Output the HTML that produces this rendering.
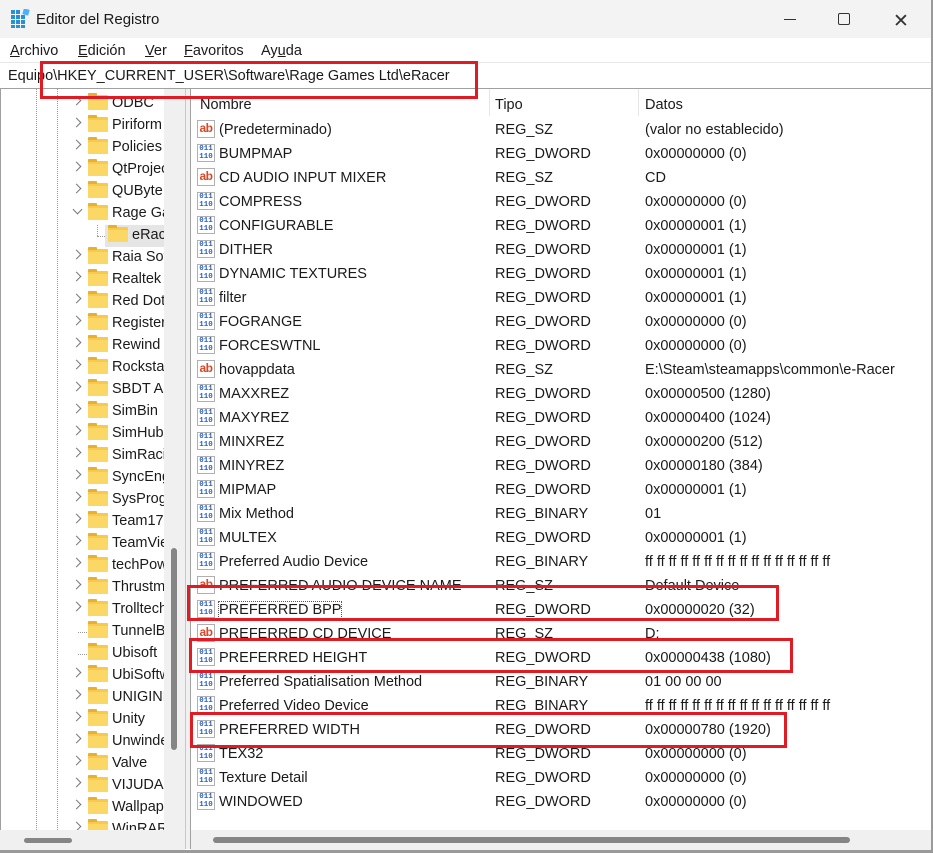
<!DOCTYPE html>
<html><head><meta charset="utf-8"><style>
*{margin:0;padding:0;box-sizing:border-box}
body{width:933px;height:853px;background:#fff;font-family:"Liberation Sans",sans-serif;font-size:14.5px;color:#1a1a1a;position:relative;overflow:hidden}
.a{position:absolute;white-space:nowrap}
.title{left:0;top:0;width:933px;height:38px;background:#f3f3f3;border-right:2px solid #9a9a9a}
.menu{left:0;top:38px;width:933px;height:24px;background:#fff;border-right:2px solid #9a9a9a}
.addr{left:0;top:62px;width:933px;height:27px;background:#fff;border-top:1px solid #e8e8e8;border-bottom:1px solid #a0a0a0;border-right:2px solid #9a9a9a}
.tree{left:0;top:89px;width:164px;height:741px;overflow:hidden;background:#fff;border-left:1px solid #a0a0a0}
.tr{position:absolute;left:0;height:22px;width:170px}
.tr .ch{position:absolute;left:72px;top:6px;width:7px;height:7px;border-right:1.4px solid #777;border-top:1.4px solid #777;transform:rotate(45deg)}
.tr .fd{position:absolute;left:87px;top:4px;width:20px;height:15px;background:#f8c94a;border-radius:1px}
.tr .fd:before{content:"";position:absolute;left:0;top:-2px;width:9px;height:3px;background:#e8b030;border-radius:1px 1px 0 0}
.tr .fd:after{content:"";position:absolute;left:0;top:3px;width:20px;height:12px;background:#fbd765;border-radius:1px}
.tr span{position:absolute;left:111px;top:4px}
.vs{left:164px;top:89px;width:21px;height:741px;background:#f0f0f0}
.split{left:185px;top:89px;width:6px;height:760px;background:#f0f0f0;border-left:1px solid #c8c8c8;border-right:1px solid #a0a0a0}
.list{left:191px;top:89px;width:740px;height:741px;background:#fff;overflow:hidden}
.row{position:absolute;left:0;height:24px;width:740px}
.row .ic{position:absolute;left:6px;top:3px;width:18px;height:18px}
.row .n{position:absolute;left:28px;top:5px}
.row .t{position:absolute;left:304px;top:5px}
.row .d{position:absolute;left:454px;top:5px}
.ab{background:#fff;border:1px solid #b0b0b0;color:#d8482a;font-weight:bold;font-size:12px;line-height:15px;text-align:center;letter-spacing:-0.5px}
.bn{background:#fff;border:1px solid #b0b0b0;color:#2a62c8;font-weight:bold;font-size:7.5px;line-height:7.5px;text-align:center;padding-top:1px;font-family:"Liberation Mono",monospace}
.hs{background:#f0f0f0}
.red{position:absolute;border:3px solid #e01b24}
</style></head><body>
<div class="a title"></div>
<svg class="a" style="left:10px;top:9px" width="20" height="20" viewBox="0 0 20 20"><g fill="#2b8fd6"><rect x="1" y="6" width="4" height="4"/><rect x="6" y="6" width="4" height="4"/><rect x="11" y="6" width="4" height="4"/><rect x="1" y="11" width="4" height="4"/><rect x="6" y="11" width="4" height="4"/><rect x="11" y="11" width="4" height="4"/><rect x="1" y="16" width="4" height="3"/><rect x="6" y="16" width="4" height="3"/><rect x="11" y="16" width="4" height="3"/><rect x="1" y="1" width="4" height="4"/><rect x="6" y="1" width="4" height="4"/></g><rect x="13" y="0" width="6" height="6" fill="#4bb0ff" transform="rotate(15 16 3)"/></svg>
<div class="a" style="left:36px;top:11px;font-size:15px">Editor del Registro</div>
<div class="a" style="left:784px;top:19px;width:12px;height:1px;background:#333"></div>
<div class="a" style="left:838px;top:13px;width:12px;height:12px;border:1.3px solid #333;border-radius:2px"></div>
<div class="a" style="left:893px;top:10px;font-size:19px;color:#333">✕</div>
<div class="a menu"></div>
<div class="a" style="left:10px;top:43px"><u>A</u>rchivo</div>
<div class="a" style="left:78px;top:43px"><u>E</u>dición</div>
<div class="a" style="left:145px;top:43px"><u>V</u>er</div>
<div class="a" style="left:184px;top:43px"><u>F</u>avoritos</div>
<div class="a" style="left:261px;top:43px">Ay<u>u</u>da</div>
<div class="a addr"></div>
<div class="a" style="left:8px;top:68px">Equipo\HKEY_CURRENT_USER\Software\Rage Games Ltd\eRacer</div>

<div class="a tree">
<div class="a" style="left:35px;top:0;height:741px;border-left:1px dotted #999"></div>
<div class="a" style="left:56px;top:0;height:741px;border-left:1px dotted #999"></div>
<div class="tr" style="top:2px"><i class="ch"></i><i class="fd"></i><span>ODBC</span></div>
<div class="tr" style="top:24px"><i class="ch"></i><i class="fd"></i><span>Piriform</span></div>
<div class="tr" style="top:46px"><i class="ch"></i><i class="fd"></i><span>Policies</span></div>
<div class="tr" style="top:68px"><i class="ch"></i><i class="fd"></i><span>QtProject</span></div>
<div class="tr" style="top:90px"><i class="ch"></i><i class="fd"></i><span>QUByte</span></div>
<div class="tr" style="top:112px"><i class="ch" style="transform:rotate(135deg);left:73px;top:5px"></i><i class="fd"></i><span>Rage Games</span></div>
<div class="a" style="left:96px;top:136px;height:11px;border-left:1px dotted #999"></div>
<div class="a" style="left:96px;top:147px;width:10px;border-top:1px dotted #999"></div>
<div class="a" style="left:104px;top:136px;width:60px;height:22px;background:#e5e5e5"></div>
<div class="tr" style="top:134px;left:20px"><i class="fd"></i><span>eRacer</span></div>
<div class="tr" style="top:156px"><i class="ch"></i><i class="fd"></i><span>Raia Software</span></div>
<div class="tr" style="top:178px"><i class="ch"></i><i class="fd"></i><span>Realtek</span></div>
<div class="tr" style="top:200px"><i class="ch"></i><i class="fd"></i><span>Red Dot</span></div>
<div class="tr" style="top:222px"><i class="ch"></i><i class="fd"></i><span>Registered</span></div>
<div class="tr" style="top:244px"><i class="ch"></i><i class="fd"></i><span>Rewind</span></div>
<div class="tr" style="top:266px"><i class="ch"></i><i class="fd"></i><span>Rockstar</span></div>
<div class="tr" style="top:288px"><i class="ch"></i><i class="fd"></i><span>SBDT AB</span></div>
<div class="tr" style="top:310px"><i class="ch"></i><i class="fd"></i><span>SimBin</span></div>
<div class="tr" style="top:332px"><i class="ch"></i><i class="fd"></i><span>SimHub</span></div>
<div class="tr" style="top:354px"><i class="ch"></i><i class="fd"></i><span>SimRacing</span></div>
<div class="tr" style="top:376px"><i class="ch"></i><i class="fd"></i><span>SyncEngine</span></div>
<div class="tr" style="top:398px"><i class="ch"></i><i class="fd"></i><span>SysProg</span></div>
<div class="tr" style="top:420px"><i class="ch"></i><i class="fd"></i><span>Team17</span></div>
<div class="tr" style="top:442px"><i class="ch"></i><i class="fd"></i><span>TeamViewer</span></div>
<div class="tr" style="top:464px"><i class="ch"></i><i class="fd"></i><span>techPowerUp</span></div>
<div class="tr" style="top:486px"><i class="ch"></i><i class="fd"></i><span>Thrustmaster</span></div>
<div class="tr" style="top:508px"><i class="ch"></i><i class="fd"></i><span>Trolltech</span></div>
<div class="a" style="left:77px;top:543px;width:9px;border-top:1px dotted #999"></div>
<div class="tr" style="top:530px"><i class="fd"></i><span>TunnelBear</span></div>
<div class="a" style="left:77px;top:565px;width:9px;border-top:1px dotted #999"></div>
<div class="tr" style="top:552px"><i class="fd"></i><span>Ubisoft</span></div>
<div class="tr" style="top:574px"><i class="ch"></i><i class="fd"></i><span>UbiSoftware</span></div>
<div class="tr" style="top:596px"><i class="ch"></i><i class="fd"></i><span>UNIGINE</span></div>
<div class="tr" style="top:618px"><i class="ch"></i><i class="fd"></i><span>Unity</span></div>
<div class="tr" style="top:640px"><i class="ch"></i><i class="fd"></i><span>Unwinder</span></div>
<div class="tr" style="top:662px"><i class="ch"></i><i class="fd"></i><span>Valve</span></div>
<div class="tr" style="top:684px"><i class="ch"></i><i class="fd"></i><span>VIJUDA</span></div>
<div class="tr" style="top:706px"><i class="ch"></i><i class="fd"></i><span>Wallpaper</span></div>
<div class="tr" style="top:728px"><i class="ch"></i><i class="fd"></i><span>WinRAR</span></div>
</div>
<div class="a vs"></div>
<div class="a" style="left:171px;top:548px;width:6px;height:202px;background:#858585;border-radius:3px"></div>
<div class="a hs" style="left:0;top:830px;width:185px;height:20px"></div>
<div class="a" style="left:24px;top:838px;width:48px;height:5px;background:#858585;border-radius:3px"></div>
<div class="a split"></div>

<div class="a list">
<div class="a" style="left:9px;top:8px">Nombre</div>
<div class="a" style="left:298px;top:0;width:1px;height:27px;background:#e5e5e5"></div>
<div class="a" style="left:304px;top:8px">Tipo</div>
<div class="a" style="left:447px;top:0;width:1px;height:27px;background:#e5e5e5"></div>
<div class="a" style="left:454px;top:8px">Datos</div>
<div class="row" style="top:28px"><div class="ic ab">ab</div><span class="n">(Predeterminado)</span><span class="t">REG_SZ</span><span class="d">(valor no establecido)</span></div>
<div class="row" style="top:52px"><div class="ic bn">011<br>110</div><span class="n">BUMPMAP</span><span class="t">REG_DWORD</span><span class="d">0x00000000 (0)</span></div>
<div class="row" style="top:76px"><div class="ic ab">ab</div><span class="n">CD AUDIO INPUT MIXER</span><span class="t">REG_SZ</span><span class="d">CD</span></div>
<div class="row" style="top:100px"><div class="ic bn">011<br>110</div><span class="n">COMPRESS</span><span class="t">REG_DWORD</span><span class="d">0x00000000 (0)</span></div>
<div class="row" style="top:124px"><div class="ic bn">011<br>110</div><span class="n">CONFIGURABLE</span><span class="t">REG_DWORD</span><span class="d">0x00000001 (1)</span></div>
<div class="row" style="top:148px"><div class="ic bn">011<br>110</div><span class="n">DITHER</span><span class="t">REG_DWORD</span><span class="d">0x00000001 (1)</span></div>
<div class="row" style="top:172px"><div class="ic bn">011<br>110</div><span class="n">DYNAMIC TEXTURES</span><span class="t">REG_DWORD</span><span class="d">0x00000001 (1)</span></div>
<div class="row" style="top:196px"><div class="ic bn">011<br>110</div><span class="n">filter</span><span class="t">REG_DWORD</span><span class="d">0x00000001 (1)</span></div>
<div class="row" style="top:220px"><div class="ic bn">011<br>110</div><span class="n">FOGRANGE</span><span class="t">REG_DWORD</span><span class="d">0x00000000 (0)</span></div>
<div class="row" style="top:244px"><div class="ic bn">011<br>110</div><span class="n">FORCESWTNL</span><span class="t">REG_DWORD</span><span class="d">0x00000000 (0)</span></div>
<div class="row" style="top:268px"><div class="ic ab">ab</div><span class="n">hovappdata</span><span class="t">REG_SZ</span><span class="d">E:\Steam\steamapps\common\e-Racer</span></div>
<div class="row" style="top:292px"><div class="ic bn">011<br>110</div><span class="n">MAXXREZ</span><span class="t">REG_DWORD</span><span class="d">0x00000500 (1280)</span></div>
<div class="row" style="top:316px"><div class="ic bn">011<br>110</div><span class="n">MAXYREZ</span><span class="t">REG_DWORD</span><span class="d">0x00000400 (1024)</span></div>
<div class="row" style="top:340px"><div class="ic bn">011<br>110</div><span class="n">MINXREZ</span><span class="t">REG_DWORD</span><span class="d">0x00000200 (512)</span></div>
<div class="row" style="top:364px"><div class="ic bn">011<br>110</div><span class="n">MINYREZ</span><span class="t">REG_DWORD</span><span class="d">0x00000180 (384)</span></div>
<div class="row" style="top:388px"><div class="ic bn">011<br>110</div><span class="n">MIPMAP</span><span class="t">REG_DWORD</span><span class="d">0x00000001 (1)</span></div>
<div class="row" style="top:412px"><div class="ic bn">011<br>110</div><span class="n">Mix Method</span><span class="t">REG_BINARY</span><span class="d">01</span></div>
<div class="row" style="top:436px"><div class="ic bn">011<br>110</div><span class="n">MULTEX</span><span class="t">REG_DWORD</span><span class="d">0x00000001 (1)</span></div>
<div class="row" style="top:460px"><div class="ic bn">011<br>110</div><span class="n">Preferred Audio Device</span><span class="t">REG_BINARY</span><span class="d">ff ff ff ff ff ff ff ff ff ff ff ff ff ff ff ff</span></div>
<div class="row" style="top:484px"><div class="ic ab">ab</div><span class="n">PREFERRED AUDIO DEVICE NAME</span><span class="t">REG_SZ</span><span class="d">Default Device</span></div>
<div class="row" style="top:508px"><div class="ic bn">011<br>110</div><span class="n" style="outline:1px dotted #555">PREFERRED BPP</span><span class="t">REG_DWORD</span><span class="d">0x00000020 (32)</span></div>
<div class="row" style="top:532px"><div class="ic ab">ab</div><span class="n">PREFERRED CD DEVICE</span><span class="t">REG_SZ</span><span class="d">D:</span></div>
<div class="row" style="top:556px"><div class="ic bn">011<br>110</div><span class="n">PREFERRED HEIGHT</span><span class="t">REG_DWORD</span><span class="d">0x00000438 (1080)</span></div>
<div class="row" style="top:580px"><div class="ic bn">011<br>110</div><span class="n">Preferred Spatialisation Method</span><span class="t">REG_BINARY</span><span class="d">01 00 00 00</span></div>
<div class="row" style="top:604px"><div class="ic bn">011<br>110</div><span class="n">Preferred Video Device</span><span class="t">REG_BINARY</span><span class="d">ff ff ff ff ff ff ff ff ff ff ff ff ff ff ff ff</span></div>
<div class="row" style="top:628px"><div class="ic bn">011<br>110</div><span class="n">PREFERRED WIDTH</span><span class="t">REG_DWORD</span><span class="d">0x00000780 (1920)</span></div>
<div class="row" style="top:652px"><div class="ic bn">011<br>110</div><span class="n">TEX32</span><span class="t">REG_DWORD</span><span class="d">0x00000000 (0)</span></div>
<div class="row" style="top:676px"><div class="ic bn">011<br>110</div><span class="n">Texture Detail</span><span class="t">REG_DWORD</span><span class="d">0x00000000 (0)</span></div>
<div class="row" style="top:700px"><div class="ic bn">011<br>110</div><span class="n">WINDOWED</span><span class="t">REG_DWORD</span><span class="d">0x00000000 (0)</span></div>
</div>
<div class="a hs" style="left:191px;top:830px;width:740px;height:20px"></div>
<div class="a" style="left:213px;top:837px;width:637px;height:6px;background:#858585;border-radius:3px"></div>
<div class="a" style="left:931px;top:0;width:2px;height:853px;background:#9a9a9a"></div>
<div class="a" style="left:0;top:850px;width:933px;height:3px;background:#9a9a9a"></div>

<div class="red" style="left:40px;top:61px;width:438px;height:38px"></div>
<div class="red" style="left:187px;top:585px;width:592px;height:36px"></div>
<div class="red" style="left:189px;top:638px;width:604px;height:35px"></div>
<div class="red" style="left:190px;top:712px;width:597px;height:36px"></div>
</body></html>
